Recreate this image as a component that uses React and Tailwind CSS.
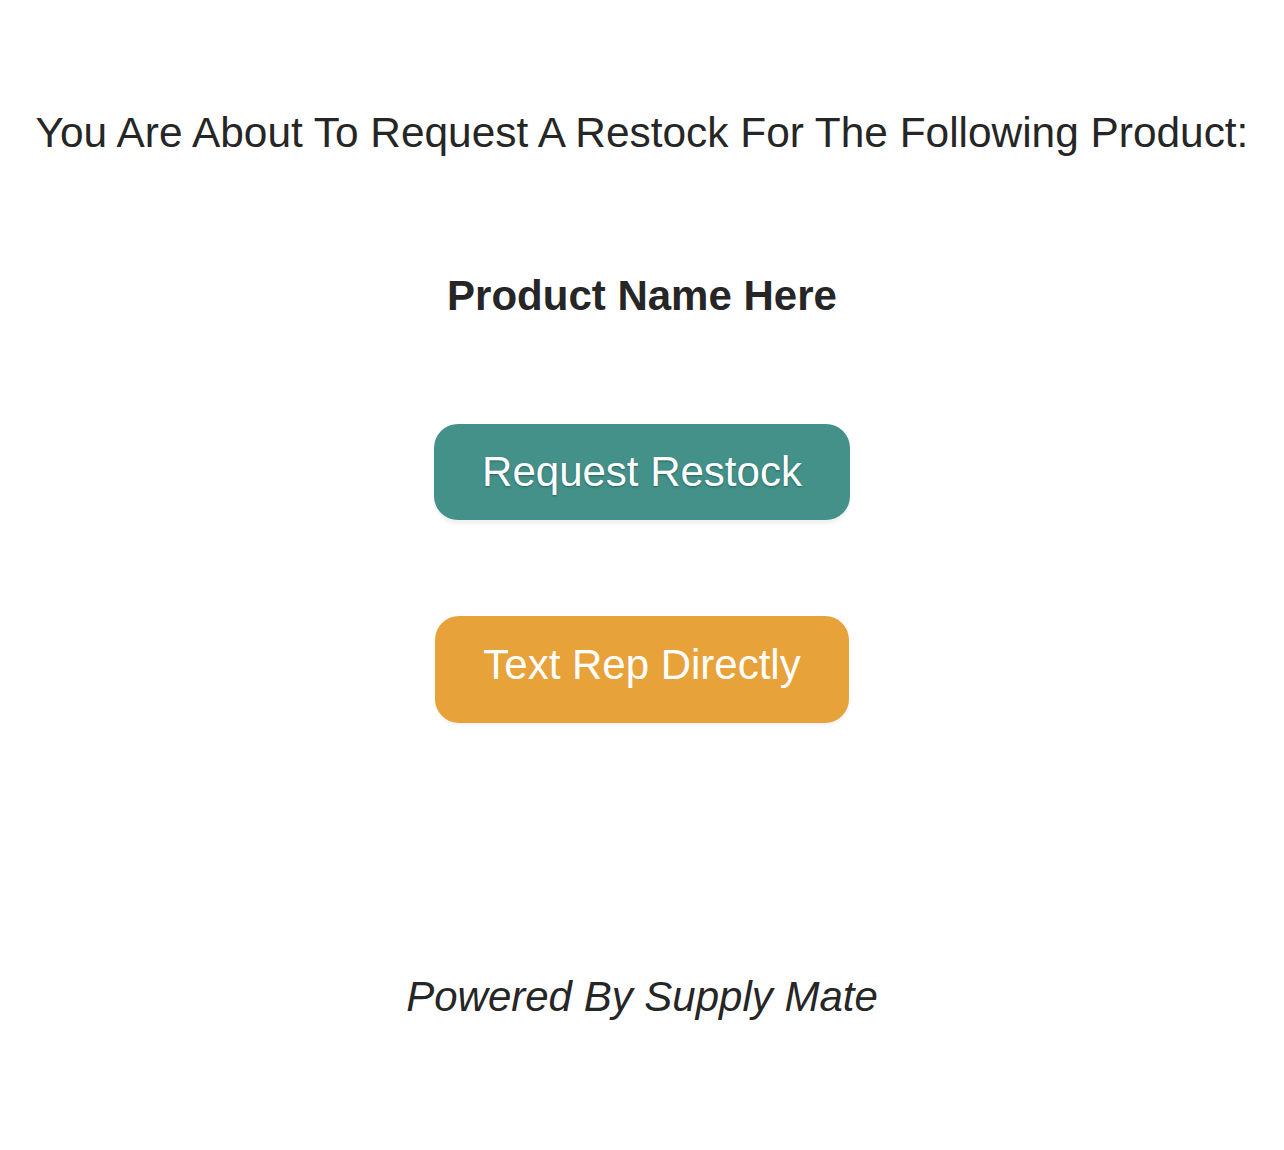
export default function App() {
  return (
    <div className="min-h-[1150px] bg-white flex flex-col items-center text-[#262626] font-['Liberation_Sans',Arial,sans-serif]">
      <h1 className="mt-[108px] text-[42.4px] leading-[50px] font-normal whitespace-nowrap">
        You Are About To Request A Restock For The Following Product:
      </h1>
      <h2 className="mt-[115px] text-[42px] leading-[46px] font-bold">Product Name Here</h2>

      <button
        type="button"
        className="mt-[105px] w-[416px] h-[96px] rounded-[24px] bg-[#44918a] text-white text-[42px] leading-none shadow-[0_4px_3px_rgba(0,0,0,0.06)] [text-shadow:0_1px_2px_rgba(0,60,50,0.5)]"
      >
        Request Restock
      </button>

      <button
        type="button"
        className="mt-[96px] w-[414px] h-[107px] pb-[10px] rounded-[24px] bg-[#e8a23a] text-white text-[42px] leading-none shadow-[0_3px_3px_rgba(0,0,0,0.04)]"
      >
        Text Rep Directly
      </button>

      <p className="mt-[249px] text-[42px] leading-[50px] italic">Powered By Supply Mate</p>
    </div>
  )
}
